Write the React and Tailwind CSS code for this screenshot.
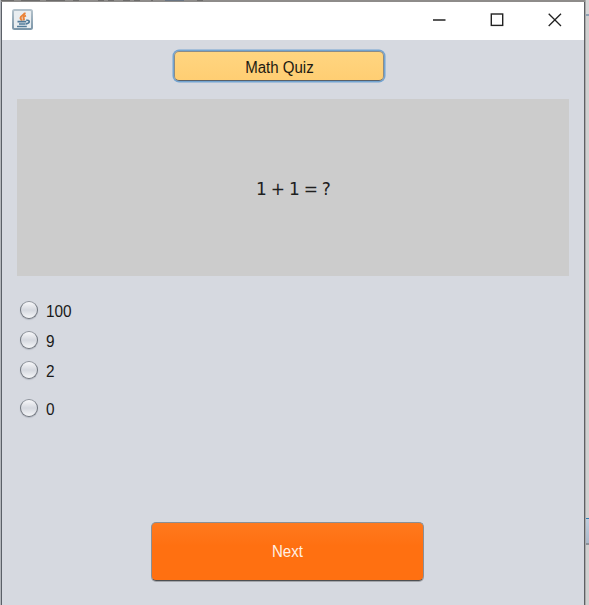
const answers = [
  { label: "100", gap: "" },
  { label: "9", gap: "mt-[12px]" },
  { label: "2", gap: "mt-[12px]" },
  { label: "0", gap: "mt-[20px]" },
];

function JavaIcon() {
  return (
    <svg className="ml-[10px] mt-[7px] h-[21px] w-[21px]" viewBox="0 0 21 21" fill="none">
      <defs>
        <linearGradient id="tile" x1="0" y1="0" x2="0" y2="1">
          <stop offset="0" stopColor="#b4c2cb" />
          <stop offset="1" stopColor="#7c96a9" />
        </linearGradient>
      </defs>
      <rect x="1" y="1" width="19" height="19" rx="1.5" fill="#e9edf0" stroke="url(#tile)" strokeWidth="2" />
      <path d="M13 3.600c-.2 2.600-4.500 2.800-4.500 5.400 0 1 1 1.600 1.500 2.600M14 6.600c-2.500.900-3.200 1.900-2.200 3 .3.400.1 1.200-.5 1.700" stroke="#ea8136" strokeWidth="2" />
      <path d="M5.500 12.700h8.600M7 15h6.600M5 17.500h9.800" stroke="#527b99" strokeWidth="1.700" />
      <path d="M14.200 11.400c4-1 4.200 2.700-.3 3.500" stroke="#527b99" strokeWidth="1.700" />
    </svg>
  );
}

function TopEdge() {
  return (
    <svg className="-mx-px h-[2px] w-[584px] shrink-0" viewBox="0 0 584 2">
      <rect width="584" height="2" fill="#8e8c8a" />
      <path d="M0 .5H13M20 .5H39M45 .5H64M72 .5H78M97 .5H103M107 .5H113M122 .5H129M133 .5H139M150 .5H152M196 .5H202" stroke="#6c6b6a" />
      <path d="M164 .5H183" stroke="#697482" />
    </svg>
  );
}

function TitleBar() {
  return (
    <header className="flex h-[38px] shrink-0 justify-between bg-white">
      <JavaIcon />
      <div className="mr-[22px] mt-[11px] flex gap-[44px]">
        <svg className="h-[14px] w-[14px]" viewBox="0 0 14 14" fill="none" stroke="#222">
          <path d="M1 7H13.500" strokeWidth="1.500" />
        </svg>
        <svg className="h-[14px] w-[14px]" viewBox="0 0 14 14" fill="none" stroke="#222">
          <rect x="1.300" y="1" width="11.400" height="11.400" strokeWidth="1.400" />
        </svg>
        <svg className="h-[14px] w-[14px]" viewBox="0 0 14 14" fill="none" stroke="#222">
          <path d="M.7.700 13 13M13 .700.700 13" strokeWidth="1.300" />
        </svg>
      </div>
    </header>
  );
}

function Radio({ label, gap }) {
  return (
    <label className={"flex h-[18px] items-center " + gap}>
      <span className="h-[18px] w-[18px] rounded-full border border-[#70757d] border-t-[#8e939b] bg-linear-to-b from-[#f8f8fa] via-[#d5d8df] to-[#f5f6f8] shadow-[0_1px_1px_#b5b9c3]" />
      <span className="ml-[8px] mt-[3px] inline-block origin-left scale-x-[.96] text-[16px] leading-[18px] text-[#191919]">{label}</span>
    </label>
  );
}

export default function App() {
  return (
    <div className="flex h-[605px] w-[589px] overflow-hidden bg-[#d0d0d0] font-['Liberation_Sans',sans-serif]">
      <div className="w-px shrink-0 bg-[#b4b7bc]" />
      <main className="flex w-[584px] shrink-0 flex-col border-x border-l-[#5b6068] border-r-[#5e6064] bg-[#d6d9e0]">
        <TopEdge />
        <TitleBar />
        <button className="ml-[172px] mt-[11px] flex h-[30px] w-[210px] shrink-0 items-center justify-center rounded-[5px] border border-[#8b8c88] border-b-[#596169] bg-linear-to-b from-[#ffd580] to-[#ffce73] text-[#1d1a12] shadow-[0_0_0_1.500px_#73a4d1]">
          <span className="mt-[3px] inline-block scale-x-[.94] text-[16px] leading-[18px]">Math Quiz</span>
        </button>
        <section className="ml-[15px] mt-[18px] flex h-[177px] w-[552px] shrink-0 items-center justify-center bg-[#cccccc]">
          <p className="ml-px mt-[4px] font-['DejaVu_Sans',sans-serif] text-[17px] [word-spacing:-1.500px] text-[#202020]">1 + 1 = ?</p>
        </section>
        <div className="ml-[18px] mt-[25px] flex flex-col">
          {answers.map((a) => <Radio key={a.label} {...a} />)}
        </div>
        <button className="ml-[149px] mt-[105px] flex h-[59px] w-[273px] shrink-0 items-center justify-center rounded-[5px] border border-[#8b8f94] border-b-[#4e5052] bg-linear-to-b from-[#ff791d] to-[#ff7011] to-40% text-[#fff0e5] shadow-[0_1px_0_#a4a6ab]">
          <span className="mt-[1px] inline-block scale-x-[.94] text-[16px] leading-[18px]">Next</span>
        </button>
      </main>
      <aside className="flex grow flex-col border-l border-[#aaa] bg-[#d0d0d0]">
        <div className="h-[14px] bg-[#d7d7d7]" />
        <div className="h-[2px] bg-[#8fa2b5]" />
        <div className="h-[502px]" />
        <div className="h-[27px] border-t border-b-2 border-t-[#327cae] border-b-[#8c9299] bg-linear-to-b from-[#bfcddd] to-[#abb9ca]" />
      </aside>
    </div>
  );
}
